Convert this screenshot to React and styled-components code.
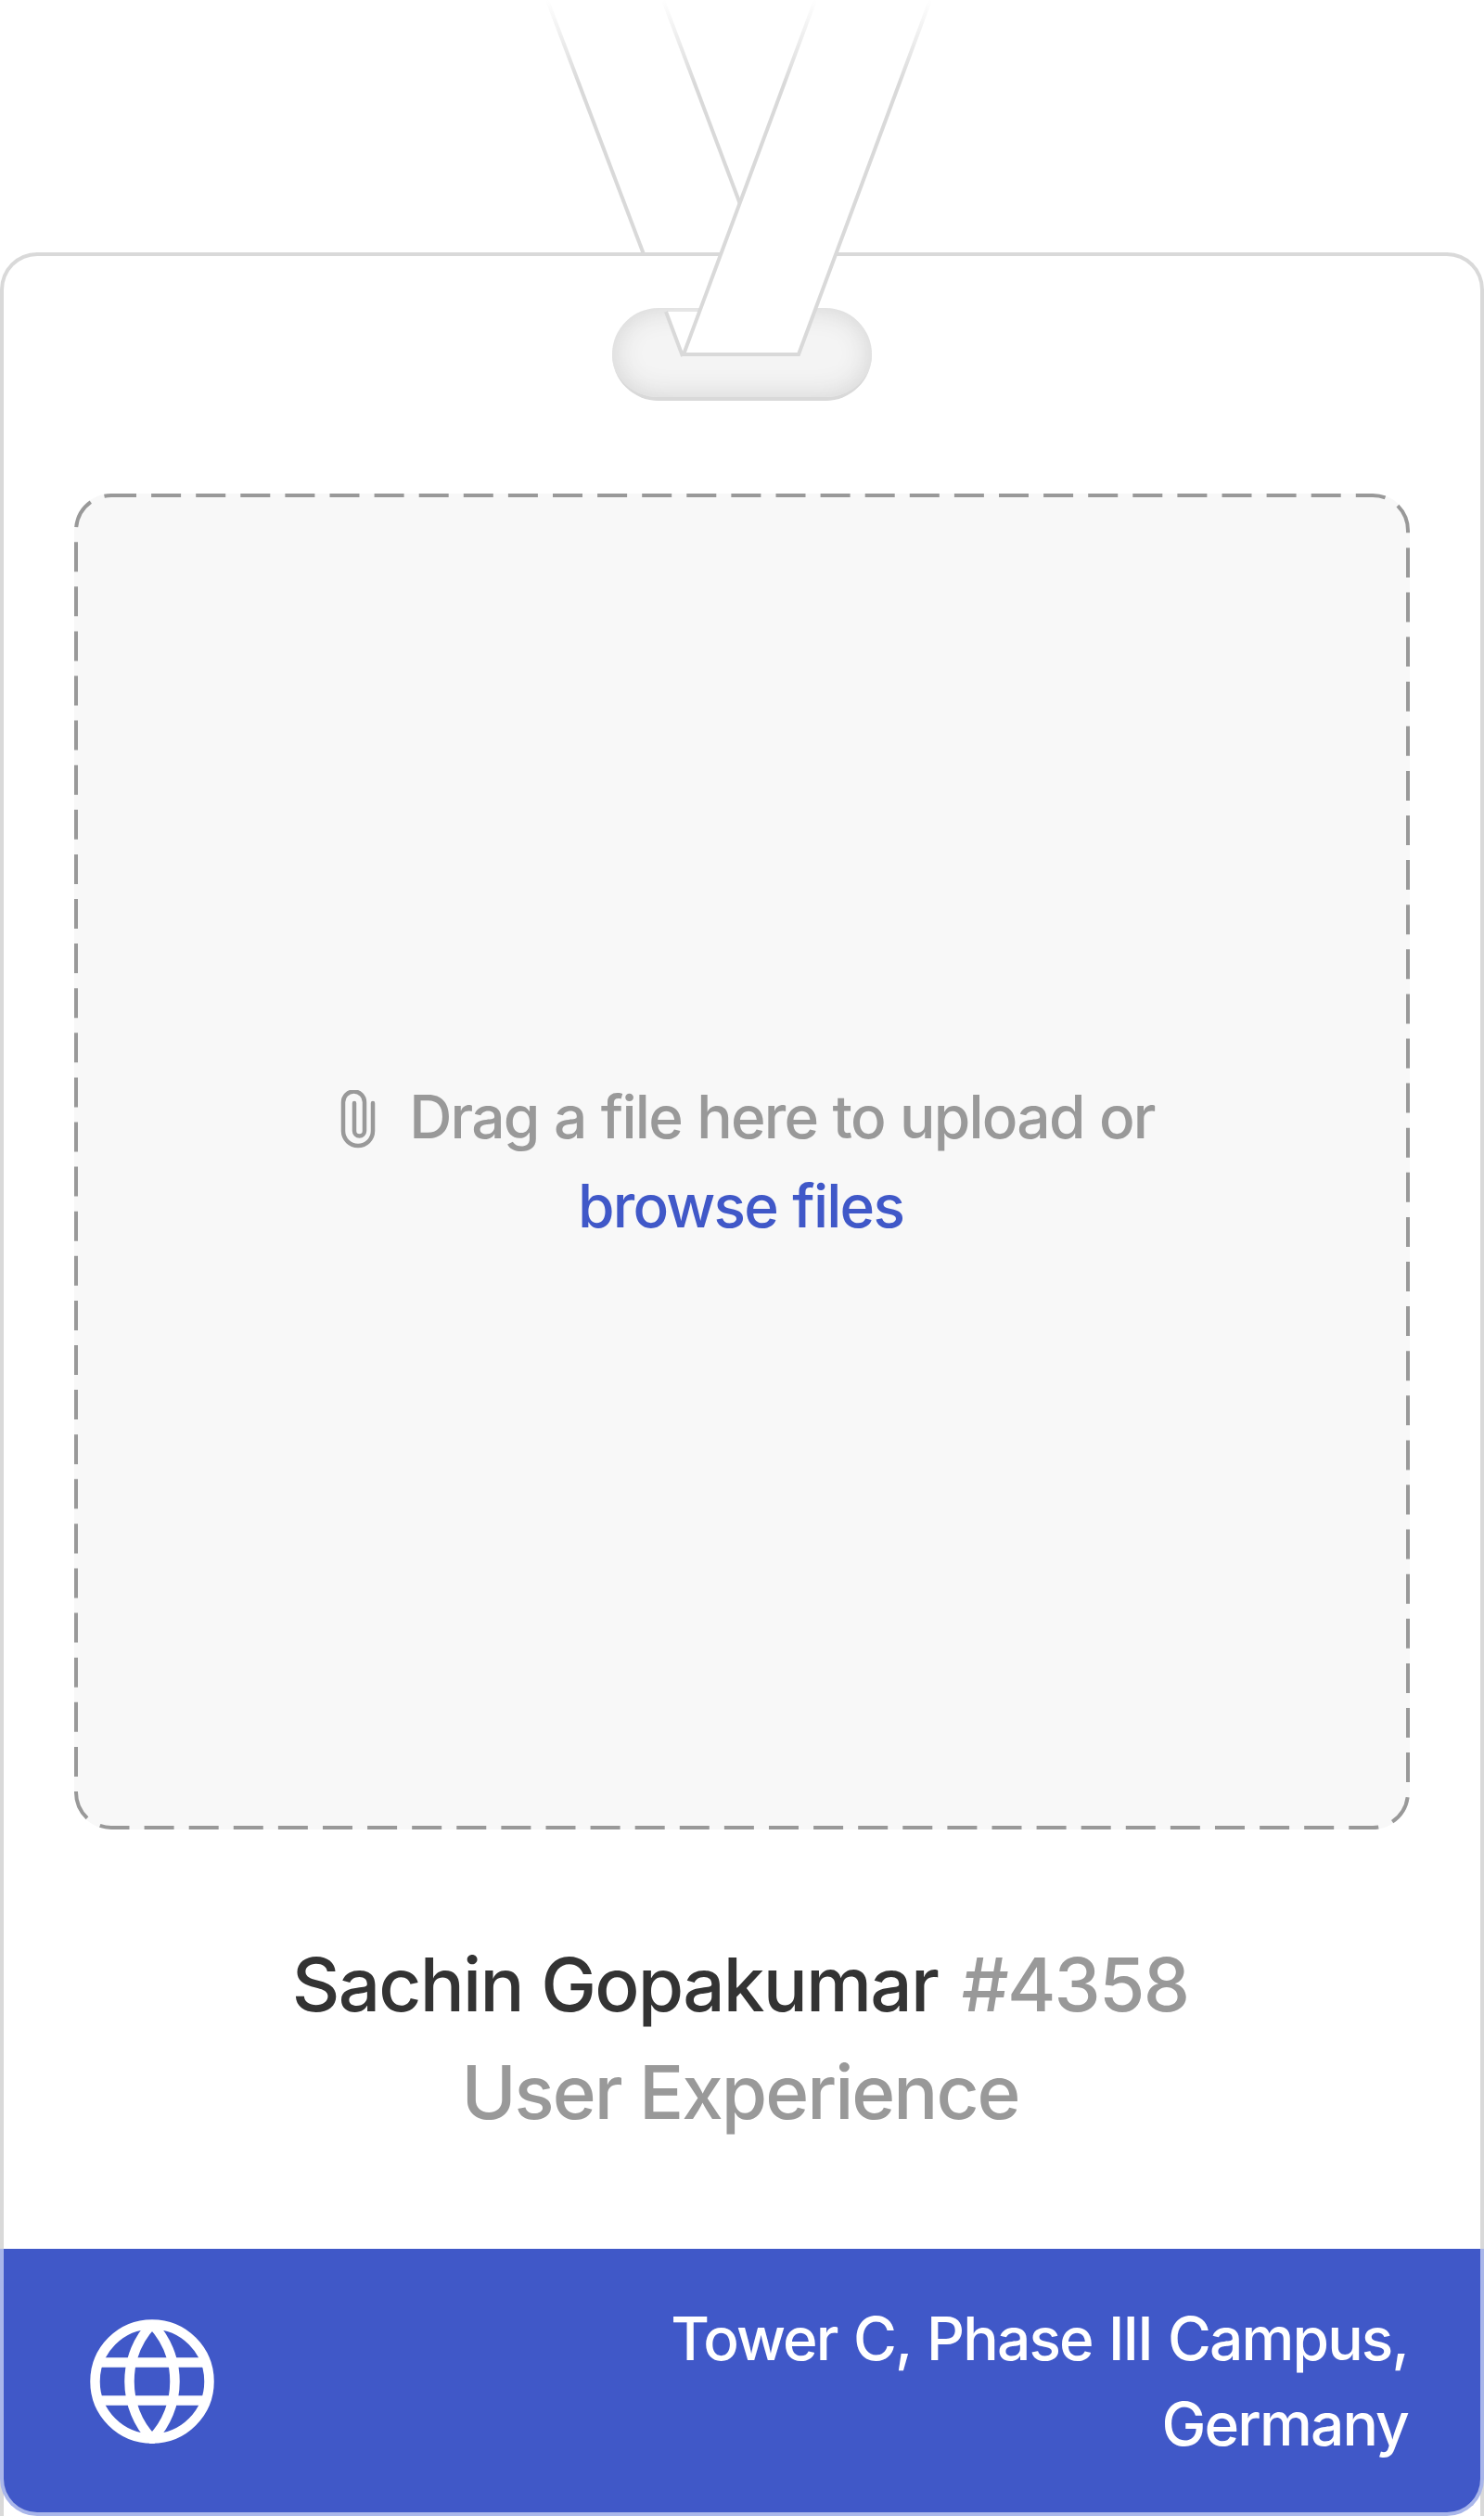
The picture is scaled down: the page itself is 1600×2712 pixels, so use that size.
import React from "react";
import styled, { createGlobalStyle } from "styled-components";

const COLORS = {
  line: "#d9d9d9",
  gray: "#999999",
  ink: "#333333",
  blue: "#4058c8",
  blueEdge: "#a9b6ea",
};

const App = () => (
  <>
    <GlobalStyle />
    <Page>
      {/* back of the strap passes behind the card */}
      <StrapLayer width="1600" height="440" viewBox="0 0 1600 440" $layer={0}>
        <defs>
          <linearGradient id="strapFadeBack" gradientUnits="userSpaceOnUse" x1="0" y1="0" x2="0" y2="90">
            <stop offset="0" stopColor="#ffffff" />
            <stop offset="1" stopColor={COLORS.line} />
          </linearGradient>
        </defs>
        <StrapEdge d="M590 0 L694 274" stroke="url(#strapFadeBack)" />
        <StrapEdge d="M715 0 L798 220" stroke="url(#strapFadeBack)" />
      </StrapLayer>

      <Card>
        <Slot />
        <DropZone>
          <DashedFrame>
            <rect x="2" y="2" width="1436" height="1436" rx="38" ry="38" />
          </DashedFrame>
          <DropText>
            <ClipIcon viewBox="0 0 64 64" width="64" height="64">
              <path d="M50 14 V44 a16 16 0 0 1 -32 0 V13 a11.5 11.5 0 0 1 23 0 V44 a5.5 5.5 0 0 1 -11 0 V14" />
            </ClipIcon>
            Drag a file here to upload or
            <br />
            <BrowseLink>browse files</BrowseLink>
          </DropText>
        </DropZone>
        <Identity>
          <Name>
            Sachin Gopakumar <Number>#4358</Number>
          </Name>
          <Department>User Experience</Department>
        </Identity>
        <Footer>
          <GlobeIcon viewBox="0 0 134 134" width="134" height="134">
            <circle cx="67" cy="67" r="61.5" />
            <path d="M67 5 A90.7 90.7 0 0 0 67 129 A90.7 90.7 0 0 0 67 5" />
            <path d="M11 46.5 H123 M11 87.5 H123" />
          </GlobeIcon>
          <Address>Tower C, Phase III Campus, Germany</Address>
        </Footer>
      </Card>

      {/* front of the strap lies over the card and goes into the slot */}
      <StrapLayer width="1600" height="440" viewBox="0 0 1600 440" $layer={2}>
        <defs>
          <linearGradient id="strapFadeFront" gradientUnits="userSpaceOnUse" x1="0" y1="0" x2="0" y2="90">
            <stop offset="0" stopColor="#ffffff" />
            <stop offset="1" stopColor={COLORS.line} />
          </linearGradient>
        </defs>
        <polygon points="718,336 757,336 737,384" fill="#ffffff" />
        <StrapEdge d="M718 336 L736 384" stroke={COLORS.line} />
        <polygon points="879,0 1003,0 860,382 737,382" fill="#ffffff" />
        <StrapEdge d="M879 0 L737 382 L861 382 L1003 0" stroke="url(#strapFadeFront)" />
      </StrapLayer>
    </Page>
  </>
);

const GlobalStyle = createGlobalStyle`
  html, body {
    margin: 0;
    padding: 0;
    background: #ffffff;
  }
  body {
    font-family: Inter, "Liberation Sans", sans-serif;
    font-weight: 480;
  }
`;

const Page = styled.div`
  position: relative;
  width: 1600px;
  height: 2712px;
  padding-top: 272px;
  box-sizing: border-box;
  overflow: hidden;
`;

const StrapLayer = styled.svg`
  position: absolute;
  top: 0;
  left: 0;
  z-index: ${(p) => p.$layer};
  pointer-events: none;
`;

const StrapEdge = styled.path`
  fill: none;
  stroke-width: 4;
`;

const Card = styled.div`
  position: relative;
  z-index: 1;
  box-sizing: border-box;
  height: 2440px;
  display: flex;
  flex-direction: column;
  align-items: center;
  padding-top: 56px;
  background: #ffffff;
  border: 4px solid ${COLORS.line};
  border-bottom: 0;
  border-radius: 40px 40px 0 0;
`;

const Slot = styled.div`
  box-sizing: border-box;
  width: 280px;
  height: 100px;
  border-radius: 50px;
  background: #f4f4f4;
  border-bottom: 4px solid ${COLORS.line};
  box-shadow: inset 0 0 30px #d2d2d2;
`;

const DropZone = styled.div`
  position: relative;
  width: 1440px;
  height: 1440px;
  margin-top: 100px;
  display: flex;
  align-items: center;
  justify-content: center;
  background: #f8f8f8;
  border-radius: 40px;
`;

const DashedFrame = styled.svg.attrs({ width: 1440, height: 1440 })`
  position: absolute;
  inset: 0;

  rect {
    fill: none;
    stroke: ${COLORS.gray};
    stroke-width: 4;
    stroke-dasharray: 32 16.1;
    stroke-dashoffset: 5;
  }
`;

const DropText = styled.p`
  margin: 0;
  padding-right: 3px;
  font-size: 64px;
  line-height: 96px;
  letter-spacing: -0.028em;
  word-spacing: 1px;
  color: ${COLORS.gray};
  text-align: center;
`;

const ClipIcon = styled.svg`
  vertical-align: -12px;
  margin-right: 25px;

  path {
    fill: none;
    stroke: ${COLORS.gray};
    stroke-width: 4.5;
    stroke-linecap: round;
  }
`;

const BrowseLink = styled.a`
  color: ${COLORS.blue};
`;

const Identity = styled.div`
  margin-top: 109px;
  padding-right: 4px;
  text-align: center;
  font-size: 80px;
  line-height: 116px;
  letter-spacing: -0.0225em;
`;

const Name = styled.div`
  color: ${COLORS.ink};
`;

const Number = styled.span`
  margin-left: 6px;
  color: ${COLORS.gray};
`;

const Department = styled.div`
  letter-spacing: -0.025em;
  color: ${COLORS.gray};
`;

const Footer = styled.div`
  box-sizing: border-box;
  align-self: stretch;
  height: 288px;
  margin: auto -4px 0;
  padding: 2px 78px 0 93px;
  display: flex;
  align-items: center;
  justify-content: space-between;
  background: ${COLORS.blue};
  border: 4px solid ${COLORS.blueEdge};
  border-top: 0;
  border-radius: 0 0 40px 40px;
`;

const GlobeIcon = styled.svg`
  flex: none;

  circle,
  path {
    fill: none;
    stroke: #ffffff;
    stroke-width: 10.5;
  }
`;

const Address = styled.div`
  max-width: 860px;
  font-size: 64px;
  line-height: 92px;
  letter-spacing: -0.029em;
  word-spacing: 2px;
  color: #ffffff;
  text-align: right;
`;

export default App;
